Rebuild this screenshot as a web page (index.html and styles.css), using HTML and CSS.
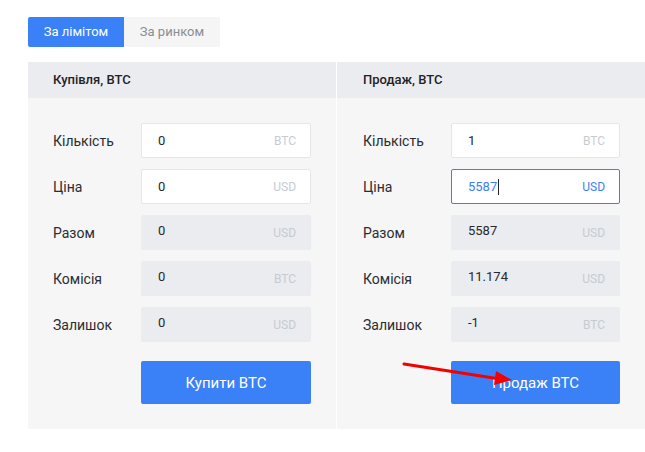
FILE: index.html
```html
<!DOCTYPE html>
<html lang="uk">
<head>
  <meta charset="UTF-8">
  <title>Торгівля BTC</title>
<link rel="stylesheet" href="styles.css">
</head>
<body>

<div class="page">
  <div class="tabs">
    <div class="tab active">За лімітом</div>
    <div class="tab">За ринком</div>
  </div>

  <div class="panels">
    <div class="panel">
      <div class="panel-head">Купівля, BTC</div>
      <div class="panel-body">
        <div class="row"><span class="label">Кількість</span><div class="field"><span class="val">0</span><span class="unit">BTC</span></div></div>
        <div class="row"><span class="label">Ціна</span><div class="field"><span class="val">0</span><span class="unit">USD</span></div></div>
        <div class="row"><span class="label">Разом</span><div class="field off"><span class="val">0</span><span class="unit">USD</span></div></div>
        <div class="row"><span class="label">Комісія</span><div class="field off"><span class="val">0</span><span class="unit">BTC</span></div></div>
        <div class="row"><span class="label">Залишок</span><div class="field off"><span class="val">0</span><span class="unit">USD</span></div></div>
        <div class="row"><span class="label"></span><button class="btn">Купити BTC</button></div>
      </div>
    </div>

    <div class="panel sell">
      <div class="panel-head">Продаж, BTC</div>
      <div class="panel-body">
        <div class="row"><span class="label">Кількість</span><div class="field"><span class="val">1</span><span class="unit">BTC</span></div></div>
        <div class="row"><span class="label">Ціна</span><div class="field focus"><span class="val">5587<i class="caret"></i></span><span class="unit">USD</span></div></div>
        <div class="row"><span class="label">Разом</span><div class="field off"><span class="val">5587</span><span class="unit">USD</span></div></div>
        <div class="row"><span class="label">Комісія</span><div class="field off"><span class="val">11.174</span><span class="unit">USD</span></div></div>
        <div class="row"><span class="label">Залишок</span><div class="field off"><span class="val">-1</span><span class="unit">BTC</span></div></div>
        <div class="row"><span class="label"></span><button class="btn">Продаж BTC</button></div>
      </div>
    </div>
  </div>
</div>

<svg class="arrow" width="130" height="40" viewBox="0 0 130 40">
  <line x1="4" y1="7" x2="100" y2="22" stroke="#f40000" stroke-width="3" stroke-linecap="round"/>
  <polygon points="96,14 112,23 94,28" fill="#f40000"/>
</svg>

</body>
</html>
```

FILE: styles.css
```css
body {
  margin: 0px;
  background: #ffffff;
  font-family: Roboto, 'Liberation Sans', sans-serif;
  font-size: 13px;
  color: #25282d;
  overflow: hidden;
}

.page {
  padding: 17px 0 0 28px;
}

.tabs {
  display: flex;
}

.tab {
  width: 96px;
  height: 30px;
  line-height: 30px;
  text-align: center;
  background: #f5f5f5;
  color: #8a8d93;
}

.tab.active {
  background: #3a80f6;
  color: #ffffff;
  border-radius: 2px 0 0 2px;
}

.panels {
  display: flex;
  gap: 1px;
  margin-top: 15px;
  width: 640px;
}

.panel {
  width: 308px;
  flex: none;
  background: #f6f6f6;
}

.panel-head {
  height: 36px;
  line-height: 36px;
  padding-left: 25px;
  background: #ebecef;
  font-weight: 500;
  color: #1f2227;
}

.panel-body {
  display: flex;
  flex-direction: column;
  gap: 11px;
  padding: 25px 25px 25px 25px;
}

.sell .panel-head,
.sell .panel-body {
  padding-left: 26px;
}

.row {
  display: flex;
  align-items: center;
}

.label {
  width: 88px;
  flex: none;
  font-size: 14px;
  color: #2a2d33;
}

.field {
  box-sizing: border-box;
  width: 170px;
  height: 35px;
  display: flex;
  align-items: center;
  justify-content: space-between;
  padding: 0 14px 0 16px;
  background: #ffffff;
  border: 1px solid #e4e6ea;
  border-radius: 2px;
}

.field.off {
  background: #ebecef;
  border-color: #ebecef;
}

.field.off .val {
  margin-top: -4px;
}

.field.focus {
  border-color: #3a80f6;
  color: #3a80f6;
}

.val {
  font-size: 13px;
  display: flex;
  align-items: center;
}

.caret {
  display: inline-block;
  width: 1px;
  height: 16px;
  background: #25282d;
  margin-left: 1px;
}

.unit {
  font-size: 12px;
  color: #c6cbd3;
}

.field.focus .unit {
  color: #3a80f6;
}

.btn {
  width: 170px;
  height: 43px;
  margin-top: 8px;
  border: 0;
  border-radius: 2px;
  background: #3a80f6;
  color: #ffffff;
  font-family: Roboto, 'Liberation Sans', sans-serif;
  font-size: 15px;
}

/* red annotation arrow over the sell button */
.arrow {
  position: absolute;
  left: 400px;
  top: 357px;
}
```
